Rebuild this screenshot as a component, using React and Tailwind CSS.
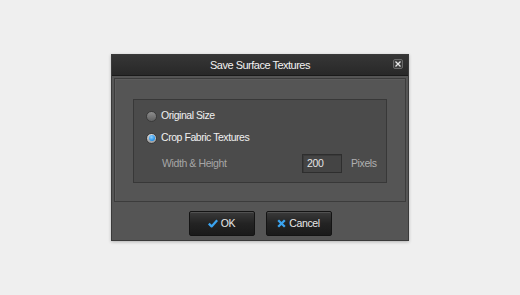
import React from "react";

function Radio({ checked }) {
  if (checked) {
    return (
      <div className="w-[11px] h-[11px] rounded-full bg-[linear-gradient(#dcdcdc,#9a9a9a)] border border-[#3a3a3a] flex items-center justify-center">
        <div className="w-[6px] h-[6px] rounded-full bg-[radial-gradient(circle_at_40%_35%,#8fd0ff,#1f8fe8_70%)]" />
      </div>
    );
  }
  return (
    <div className="w-[11px] h-[11px] rounded-full bg-[linear-gradient(#8e8e8e,#606060)] border border-[#3a3a3a]" />
  );
}

function Btn({ icon, label }) {
  return (
    <div className="w-[66px] h-[25px] rounded-[2px] border border-[#141414] bg-[linear-gradient(#3a3a3a,#232323_50%,#1a1a1a)] shadow-[inset_0_1px_0_rgba(255,255,255,0.12)] flex items-center justify-center gap-[3px] text-[10.5px] tracking-[-0.4px] text-[#e8e8e8]">
      {icon}
      <span>{label}</span>
    </div>
  );
}

export default function App() {
  return (
    <div
      className="w-[520px] h-[295px] bg-[#efefef] flex items-center justify-center"
      style={{ fontFamily: '"Liberation Sans", Arial, sans-serif' }}
    >
      <div className="w-[298px] h-[187px] bg-[#555555] border border-[#3a3a3a] shadow-[0_1px_3px_rgba(0,0,0,0.25)] flex flex-col">
        {/* title bar */}
        <div className="h-[21px] bg-[linear-gradient(#363636,#282828)] border-b border-[#1a1a1a] relative flex items-center justify-center">
          <span className="text-[11px] tracking-[-0.5px] text-[#f2f2f2]">Save Surface Textures</span>
          <div className="absolute right-[5px] top-[4px] w-[10px] h-[10px] rounded-[2px] bg-[#3c3c3c] border border-[#6a6a6a] flex items-center justify-center">
            <svg width="6" height="6" viewBox="0 0 6 6">
              <path d="M0.5 0.5 L5.5 5.5 M5.5 0.5 L0.5 5.5" stroke="#e8e8e8" strokeWidth="1.3" />
            </svg>
          </div>
        </div>
        {/* body */}
        <div className="flex-1 flex flex-col px-[2px] pt-[2px]">
          <div className="h-[124px] border border-[#3c3c3c] shadow-[inset_1px_1px_0_#5c5c5c] px-[18px] pt-[20px]">
            <div className="h-[84px] bg-[#4b4b4b] border border-[#383838] flex flex-col pl-[12px] pt-[6px]">
              <div className="h-[20px] flex items-center gap-[4px]">
                <Radio checked={false} />
                <span className="text-[10.5px] tracking-[-0.45px] text-[#f0f0f0]">Original Size</span>
              </div>
              <div className="h-[20px] mt-[2px] flex items-center gap-[4px]">
                <Radio checked={true} />
                <span className="text-[10.5px] tracking-[-0.45px] text-[#f0f0f0]">Crop Fabric Textures</span>
              </div>
              <div className="h-[19px] mt-[6px] flex items-center pl-[16px]">
                <span className="w-[140px] text-[10.5px] tracking-[-0.4px] text-[#a6a6a6]">Width &amp; Height</span>
                <div className="w-[40px] h-[19px] bg-[#444444] border border-[#2e2e2e] shadow-[inset_1px_1px_0_#3a3a3a] flex items-center pl-[4px] text-[10.5px] tracking-[-0.3px] text-[#e4e4e4]">
                  200
                </div>
                <span className="ml-[9px] text-[10.5px] tracking-[-0.4px] text-[#b0b0b0]">Pixels</span>
              </div>
            </div>
          </div>
          <div className="flex justify-center gap-[11px] mt-[9px]">
            <Btn
              label="OK"
              icon={
                <svg width="10" height="9" viewBox="0 0 10 9">
                  <path d="M0.8 4.6 L3.6 7.4 L9.2 1.2" fill="none" stroke="#3aa3ef" strokeWidth="2.3" strokeLinejoin="round" />
                </svg>
              }
            />
            <Btn
              label="Cancel"
              icon={
                <svg width="9" height="9" viewBox="0 0 9 9">
                  <path d="M1.2 1.2 L7.8 7.8 M7.8 1.2 L1.2 7.8" stroke="#3aa3ef" strokeWidth="2.3" />
                </svg>
              }
            />
          </div>
        </div>
      </div>
    </div>
  );
}
